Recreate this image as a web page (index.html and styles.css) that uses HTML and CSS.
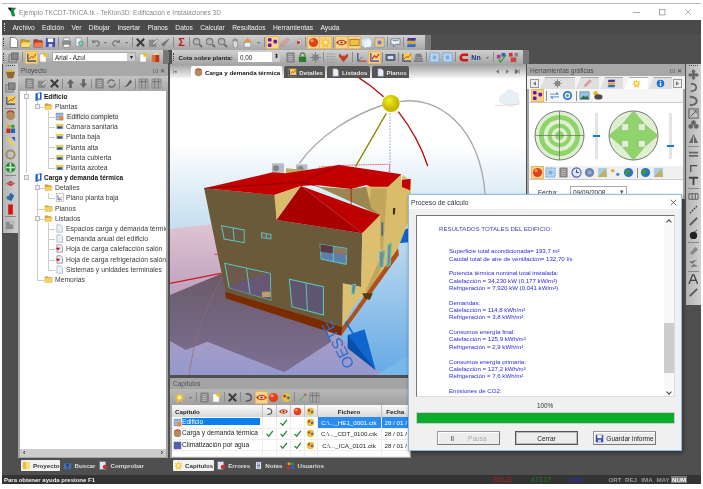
FILE: index.html
```html
<!DOCTYPE html>
<html lang="es">
<head>
<meta charset="utf-8">
<title>TeKton3D</title>
<link rel="stylesheet" href="styles.css">
</head>
<body>
<svg class="defs" xmlns="http://www.w3.org/2000/svg">
<symbol id="new" viewBox="0 0 12 12"><path d="M2.500 .5h5l3 3v8h-8z" fill="#fff" stroke="#777"/></symbol>
<symbol id="open" viewBox="0 0 12 12"><path d="M1 3h4l1 1h4v7H1z" fill="#d9a520" stroke="#8a6a10" stroke-width=".6"/><path d="M2 6h10l-2 5H1z" fill="#f8dc78"/></symbol>
<symbol id="openr" viewBox="0 0 12 12"><path d="M1 3h4l1 1h4v7H1z" fill="#c43a28" stroke="#7a2010" stroke-width=".6"/><path d="M2 6h10l-2 5H1z" fill="#ee7a50"/></symbol>
<symbol id="save" viewBox="0 0 12 12"><rect x="1" y="1" width="10" height="10" fill="#3b4fb0"/><rect x="3" y="1.500" width="6" height="4" fill="#fff"/><rect x="4" y="7.500" width="4" height="3.500" fill="#ccd"/></symbol>
<symbol id="print" viewBox="0 0 12 12"><rect x="3" y="1" width="6" height="3" fill="#eee" stroke="#777" stroke-width=".6"/><rect x="1" y="4" width="10" height="5" fill="#8a8f96"/><rect x="3" y="8" width="6" height="3" fill="#fff" stroke="#777" stroke-width=".6"/></symbol>
<symbol id="prev" viewBox="0 0 12 12"><path d="M2 1h6v9H2z" fill="#eef" stroke="#778" stroke-width=".6"/><circle cx="7.500" cy="7" r="2.500" fill="#7fd0a0" stroke="#387" stroke-width=".7"/></symbol>
<symbol id="undo" viewBox="0 0 12 12"><path d="M3 3v3h3M3 6c2-3 7-2 7 1 0 2-2 3-3 3" fill="none" stroke="#777" stroke-width="1.300"/></symbol>
<symbol id="redo" viewBox="0 0 12 12"><path d="M9 3v3H6M9 6c-2-3-7-2-7 1 0 2 2 3 3 3" fill="none" stroke="#777" stroke-width="1.300"/></symbol>
<symbol id="caret" viewBox="0 0 12 12"><path d="M3.500 5h5L6 8z" fill="#666"/></symbol>
<symbol id="x" viewBox="0 0 12 12"><path d="M2 2l8 8M10 2l-8 8" stroke="#3c3c3c" stroke-width="2.200"/></symbol>
<symbol id="edit" viewBox="0 0 12 12"><rect x="1" y="3" width="8" height="8" fill="#8a8a8a"/><path d="M5 7l5-5 1.500 1.500-5 5H5z" fill="#d8d8d8" stroke="#555" stroke-width=".5"/></symbol>
<symbol id="chk" viewBox="0 0 12 12"><path d="M1 8l3 3 7-10-5 3z" fill="#777"/></symbol>
<symbol id="zoom" viewBox="0 0 12 12"><circle cx="5" cy="5" r="3.500" fill="#b4b4b4" stroke="#777" stroke-width="1.200"/><path d="M8 8l3 3" stroke="#666" stroke-width="1.800"/></symbol>
<symbol id="hand" viewBox="0 0 12 12"><path d="M3 6V3h1v2-3h1.500v3-3H7v3-2h1.300v5l-1 4H4.500z" fill="#ddd" stroke="#777" stroke-width=".6"/></symbol>
<symbol id="home" viewBox="0 0 12 12"><path d="M1 6l5-5 5 5z" fill="#e8923a"/><rect x="2.500" y="6" width="7" height="5" fill="#e8eef6" stroke="#789" stroke-width=".5"/></symbol>
<symbol id="feet" viewBox="0 0 12 12"><rect x="1" y="1" width="4" height="4" rx="1.200" fill="#6a15b0"/><rect x="7" y="3" width="4" height="4" rx="1.200" fill="#6a15b0"/><rect x="1" y="7" width="4" height="4" rx="1.200" fill="#6a15b0"/></symbol>
<symbol id="pen" viewBox="0 0 12 12"><path d="M2 10l1-3 6-6 2 2-6 6z" fill="#e7a0a0" stroke="#a66" stroke-width=".5"/></symbol>
<symbol id="target" viewBox="0 0 12 12"><path d="M2 6l8-5v9z" fill="#ddd" stroke="#888" stroke-width=".6"/><circle cx="7" cy="6" r="2" fill="#d04030"/></symbol>
<symbol id="ball" viewBox="0 0 12 12"><circle cx="6" cy="6" r="5" fill="#e0401a"/><circle cx="4.500" cy="4" r="1.800" fill="#f59a60"/></symbol>
<symbol id="sun" viewBox="0 0 12 12"><path d="M6 0l1.300 3.500L11 2 9 5.500 12 7 8.500 8 9 12 6 9.500 3 12l.5-4L0 7l3-1.500L1 2l3.700 1.500z" fill="#f8c030"/><circle cx="6" cy="6" r="2.200" fill="#fff0a0"/></symbol>
<symbol id="eye" viewBox="0 0 12 12"><path d="M0 6c3-4 9-4 12 0-3 4-9 4-12 0z" fill="#c83a20"/><ellipse cx="6" cy="6" rx="3.500" ry="1.800" fill="#ffd9a0"/><circle cx="6" cy="6" r="1.200" fill="#433"/></symbol>
<symbol id="screen" viewBox="0 0 12 12"><rect x="1" y="2.500" width="10" height="7" fill="#f0c040" stroke="#806020" stroke-width=".7"/></symbol>
<symbol id="cube" viewBox="0 0 12 12"><path d="M1 3l7-2 3 2v7l-7 1.500L1 9z" fill="#d8e6f6"/><path d="M4 4l7-1v7l-7 1.500z" fill="#eef5fc"/></symbol>
<symbol id="box" viewBox="0 0 12 12"><rect x="1" y="1" width="10" height="10" fill="#f0c880" stroke="#88a" stroke-width=".7"/><rect x="4" y="4" width="4" height="4" fill="#5d7bc0"/></symbol>
<symbol id="bubble" viewBox="0 0 12 12"><path d="M1 2h10v6H6l-2 3V8H1z" fill="#eef2f8" stroke="#6a7a90"/><path d="M3 4h6" stroke="#48a" stroke-width="1"/></symbol>
<symbol id="layers" viewBox="0 0 12 12"><path d="M2 1h9l-1 3H1z" fill="#4a2fa8"/><path d="M2 4.500h9l-1 3H1z" fill="#e0a020"/><path d="M2 8h9l-1 3H1z" fill="#2a70c8"/></symbol>
<symbol id="rect" viewBox="0 0 12 12"><rect x="1" y="3" width="8" height="8" fill="#aaa" stroke="#666" stroke-width=".7"/><rect x="4" y="1" width="7" height="7" fill="#888" stroke="#555" stroke-width=".7"/></symbol>
<symbol id="chart" viewBox="0 0 12 12"><rect x="1" y="1" width="10" height="10" fill="#f2d050"/><path d="M2 2v8h9" fill="none" stroke="#1a3aa8" stroke-width="1.200"/><path d="M3 8l3-3 2 1 3-4" fill="none" stroke="#c03020" stroke-width="1"/></symbol>
<symbol id="star" viewBox="0 0 12 12"><path d="M2 2h7v9H2z" fill="#fff" stroke="#999" stroke-width=".6"/><path d="M8 0l1 2 2 .5-1.500 1.500.5 2-2-1-2 1 .5-2L5 2.500 7 2z" fill="#f2c020"/></symbol>
<symbol id="boxr" viewBox="0 0 12 12"><path d="M2 3h8v8H2z" fill="#e07030"/><path d="M6 3h4v8H6z" fill="#c03020"/><path d="M3 3l2-2h4l1 2z" fill="#f0d8a0"/></symbol>
<symbol id="calc" viewBox="0 0 12 12"><rect x="2" y="1" width="8" height="10" fill="#888" stroke="#666" stroke-width=".5"/><path d="M3.500 3h5M3.500 5h5M3.500 7h5M3.500 9h5" stroke="#ccc" stroke-width=".8"/></symbol>
<symbol id="lock" viewBox="0 0 12 12"><path d="M3.500 5V3.500a2.500 2.500 0 015 0V5" fill="none" stroke="#3a8a3a" stroke-width="1.200"/><rect x="2" y="5" width="8" height="6" fill="#2f7a2f"/></symbol>
<symbol id="gear" viewBox="0 0 12 12"><circle cx="6" cy="6" r="3" fill="#bbb" stroke="#666"/><path d="M6 0v12M0 6h12M2 2l8 8M10 2l-8 8" stroke="#777" stroke-width=".9"/></symbol>
<symbol id="grid" viewBox="0 0 12 12"><path d="M1 2h10M1 5h10M1 8h10M1 11h10" stroke="#8a8a9a" stroke-width="1" stroke-dasharray="1 1"/></symbol>
<symbol id="redbox" viewBox="0 0 12 12"><path d="M1 2l5 2 5-2v3l-5 6-5-6z" fill="#c23a20"/><path d="M3 4h6" stroke="#aaa"/></symbol>
<symbol id="axes" viewBox="0 0 12 12"><path d="M2 1v9" stroke="#2a3ab0" stroke-width="1.200"/><path d="M2 10h9" stroke="#c03030" stroke-width="1.200"/><path d="M2 10l5-5" stroke="#3a9a3a"/></symbol>
<symbol id="axes2" viewBox="0 0 12 12"><path d="M2 1v9h9" fill="none" stroke="#2a3ab0" stroke-width="1.200"/><path d="M3 8l3-4 2 2 3-4" fill="none" stroke="#d03020" stroke-width="1.300"/></symbol>
<symbol id="monitor" viewBox="0 0 12 12"><rect x="1" y="2.500" width="10" height="7" fill="#5a6e90" stroke="#333" stroke-width=".5"/><rect x="3" y="4.500" width="6" height="3" fill="#dfe6f2"/></symbol>
<symbol id="gray3d" viewBox="0 0 12 12"><path d="M3 2h6l2 9H1z" fill="#808080"/><path d="M2 6h8M1.500 8.500h9" stroke="#aaa" stroke-width=".7"/></symbol>
<symbol id="bluegrid" viewBox="0 0 12 12"><rect x="1" y="1" width="10" height="10" fill="#b8d4ee" stroke="#5a98d8" stroke-dasharray="1.500 1"/><rect x="4" y="4" width="4" height="4" fill="#7ab0e4"/></symbol>
<symbol id="magnet" viewBox="0 0 12 12"><path d="M11 3H6a3 3 0 000 6h5" fill="none" stroke="#d01818" stroke-width="2.800"/></symbol>
<symbol id="chk2" viewBox="0 0 12 12"><rect x="1" y="3" width="4" height="4" fill="#b03a8a"/><rect x="6" y="1" width="4" height="4" fill="#3a60c0"/><path d="M3 8l2 3 6-8" fill="none" stroke="#30a040" stroke-width="1.500"/></symbol>
<symbol id="red2" viewBox="0 0 12 12"><rect x="1" y="1" width="4" height="4" fill="#d03030"/><rect x="7" y="1" width="4" height="4" fill="#888"/><rect x="3" y="6" width="6" height="5" fill="#d04040"/></symbol>
<symbol id="up" viewBox="0 0 12 12"><path d="M6 1l4 5H7.500v5h-3V6H2z" fill="#666"/></symbol>
<symbol id="down" viewBox="0 0 12 12"><path d="M6 11l4-5H7.500V1h-3v5H2z" fill="#666"/></symbol>
<symbol id="refresh" viewBox="0 0 12 12"><path d="M2 6a4 4 0 017-2.500M10 6a4 4 0 01-7 2.500" fill="none" stroke="#666" stroke-width="1.500"/></symbol>
<symbol id="pin" viewBox="0 0 12 12"><path d="M2 10l3-2 4-6 2 2-5 5z" fill="#555"/></symbol>
<symbol id="table" viewBox="0 0 12 12"><rect x="1" y="1" width="10" height="10" fill="#aaa" stroke="#777" stroke-width=".6"/><path d="M4 1v10M8 1v10M1 4h10" stroke="#666" stroke-width=".8"/></symbol>
<symbol id="bld" viewBox="0 0 12 12"><path d="M2 2l8-2v10l-8 2z" fill="#1a5ad0"/><path d="M5 2v7l3-.700V1.500" fill="#fff"/><rect x="5" y="8" width="3" height="3" fill="#8ab"/></symbol>
<symbol id="foldero" viewBox="0 0 12 12"><path d="M1 2h4l1 1h4v7H1z" fill="#caa040"/><path d="M2.500 5H12l-2 5H1z" fill="#f6d060"/></symbol>
<symbol id="folder" viewBox="0 0 12 12"><path d="M1 2h4l1 1h5v7H1z" fill="#caa040"/><rect x="1" y="4" width="10" height="6" fill="#f6d060"/></symbol>
<symbol id="plan" viewBox="0 0 12 12"><rect x="2" y="3.500" width="9" height="6" fill="#8fa4ba"/><rect x="1" y="2.500" width="10" height="3" fill="#e8d050"/><rect x="3" y="6" width="6" height="2.500" fill="#314a78"/></symbol>
<symbol id="planact" viewBox="0 0 12 12"><rect x="1" y="1" width="10" height="10" fill="#7c9ac4"/><path d="M1 4.500h10M1 8h10M4 1v10M8 1v10" stroke="#dde" stroke-width=".7"/><rect x="6" y="6" width="5" height="5" fill="#e8882a"/></symbol>
<symbol id="planred" viewBox="0 0 12 12"><rect x="2" y="1" width="9" height="10" fill="#fff" stroke="#889" stroke-width=".6"/><path d="M4 3v6h5" fill="none" stroke="#2a3ab0"/><path d="M5 8l4-3" stroke="#d03020"/></symbol>
<symbol id="doc" viewBox="0 0 12 12"><path d="M2.500 1h5l2.500 2.500V11H2.500z" fill="#e8eef6" stroke="#7a8aa0" stroke-width=".6"/></symbol>
<symbol id="docr" viewBox="0 0 12 12"><path d="M2.500 1h5l2.500 2.500V11H2.500z" fill="#e8eef6" stroke="#444" stroke-width=".6"/><path d="M1 5h6L4 8.500z" fill="#c01010"/></symbol>
<symbol id="arrL" viewBox="0 0 12 12"><path d="M8 3v6L4 6z" fill="#777"/></symbol>
<symbol id="arrR" viewBox="0 0 12 12"><path d="M4 3v6l4-3z" fill="#777"/></symbol>
<symbol id="arrE" viewBox="0 0 12 12"><path d="M3 3v6l4-3zM8 3v6" fill="#666" stroke="#666"/></symbol>
<symbol id="info" viewBox="0 0 12 12"><circle cx="6" cy="6" r="5" fill="#1a70d8"/><rect x="5" y="5" width="2" height="4.500" fill="#fff"/><rect x="5" y="2.500" width="2" height="1.500" fill="#fff"/></symbol>
<symbol id="swap" viewBox="0 0 12 12"><path d="M1 4h7V2l3 3H1zM11 8H4v2L1 7h10z" fill="#2a7ad8"/></symbol>
<symbol id="rot" viewBox="0 0 12 12"><circle cx="6" cy="6" r="4" fill="none" stroke="#2a7ad8" stroke-width="2"/><circle cx="6" cy="6" r="1.500" fill="#4a9a3a"/></symbol>
<symbol id="land" viewBox="0 0 12 12"><rect x="1" y="2" width="10" height="8" fill="#8ec6e8" stroke="#456" stroke-width=".5"/><path d="M1 10l4-4 2 2 2-2 2 4z" fill="#3a6a50"/></symbol>
<symbol id="cloud" viewBox="0 0 12 12"><circle cx="4" cy="3.500" r="2.500" fill="#f0b020"/><ellipse cx="7" cy="7.500" rx="4.500" ry="2.800" fill="#4a4a4a"/></symbol>
<symbol id="globe" viewBox="0 0 12 12"><circle cx="6" cy="6" r="5" fill="#2a70c8"/><path d="M3 3l4 0 1 3-3 1-1 3-2-3z" fill="#3a9a3a"/></symbol>
<symbol id="clock" viewBox="0 0 12 12"><circle cx="6" cy="6" r="5" fill="#dfe6f6" stroke="#4a60b0" stroke-width="1.200"/><path d="M6 3v3h2.500" fill="none" stroke="#335"/></symbol>
<symbol id="orb" viewBox="0 0 12 12"><circle cx="6" cy="6" r="5" fill="#6a82b0"/><circle cx="6" cy="6" r="2.500" fill="#98a8c8"/></symbol>
<symbol id="dots" viewBox="0 0 12 12"><circle cx="3" cy="4" r="1.800" fill="#f2a020"/><circle cx="8.500" cy="8" r="1.800" fill="#3a8ad8"/></symbol>
<symbol id="win" viewBox="0 0 12 12"><rect x="1" y="1" width="10" height="10" fill="#a6d0e6"/><path d="M1 11L9 2l2 9z" fill="#c4b060"/></symbol>
<symbol id="gemb" viewBox="0 0 12 12"><path d="M1 3h10l-2 7H3z" fill="#8f6a30"/><path d="M3 1h6l2 2H1z" fill="#e8b040"/></symbol>
<symbol id="rgem" viewBox="0 0 12 12"><circle cx="6" cy="6" r="5" fill="#b08a60"/><path d="M2 3a5 5 0 018 0" fill="none" stroke="#c03020" stroke-width="1.500"/></symbol>
<symbol id="people" viewBox="0 0 12 12"><circle cx="4" cy="3.500" r="2" fill="#e8a020"/><circle cx="8.500" cy="3.500" r="2" fill="#3a9a3a"/><rect x="1.500" y="6" width="4.500" height="5" fill="#c03020"/><rect x="6.500" y="6" width="4.500" height="5" fill="#2a60c0"/></symbol>
<symbol id="ypen" viewBox="0 0 12 12"><path d="M1 2l4 1 6 7-2 1-6-6z" fill="#f0d040"/><path d="M7 1h4v5z" fill="#2a60c0"/></symbol>
<symbol id="coil" viewBox="0 0 12 12"><circle cx="6" cy="6" r="4.500" fill="none" stroke="#a08a50" stroke-width="2"/></symbol>
<symbol id="fan" viewBox="0 0 12 12"><circle cx="6" cy="6" r="5.500" fill="#2a8a3a"/><path d="M6 1v10M1 6h10" stroke="#c4eac4" stroke-width="1.800"/></symbol>
<symbol id="redf" viewBox="0 0 12 12"><path d="M1 6l5-3 5 3-5 3z" fill="#d03a4a"/><path d="M1 6h10" stroke="#886" stroke-width="1"/></symbol>
<symbol id="blue2" viewBox="0 0 12 12"><path d="M2 9l4-7 4 3-3 6z" fill="#2a6aa8"/><circle cx="3.500" cy="7" r="1.800" fill="#5a6a7a"/></symbol>
<symbol id="redr" viewBox="0 0 12 12"><rect x="3.500" y=".5" width="5" height="11" fill="#d80f0f"/></symbol>
<symbol id="grayt" viewBox="0 0 12 12"><rect x="1" y="3" width="8" height="8" fill="#8a8a8a"/><path d="M5 1h6v5H5z" fill="#bbb"/></symbol>
<symbol id="cross4" viewBox="0 0 12 12"><path d="M6 0l2.500 3h-1v2h2V4L12 6.500 9.500 9V8h-2v1.500h1L6 12 3.500 9.500h1V8h-2v1L0 6.500 2.500 4v1h2V3h-1z" fill="#666"/></symbol>
<symbol id="curve" viewBox="0 0 12 12"><path d="M3 2c8 0 8 8 0 8" fill="none" stroke="#555" stroke-width="1.600"/></symbol>
<symbol id="curve2" viewBox="0 0 12 12"><path d="M2 2c10 0 10 9 0 9" fill="none" stroke="#666" stroke-width="2.300"/></symbol>
<symbol id="scale" viewBox="0 0 12 12"><rect x="1" y="1" width="10" height="10" fill="none" stroke="#555"/><path d="M3 9l6-6M6 3h3v3" fill="none" stroke="#555"/></symbol>
<symbol id="clover" viewBox="0 0 12 12"><circle cx="6" cy="3" r="2.600" fill="#666"/><circle cx="3" cy="7" r="2.600" fill="#666"/><circle cx="9" cy="7" r="2.600" fill="#666"/></symbol>
<symbol id="tri" viewBox="0 0 12 12"><path d="M6 1l5 10H1z" fill="#666"/><path d="M6 4v7" stroke="#ccc"/></symbol>
<symbol id="bars" viewBox="0 0 12 12"><path d="M1 4h10M1 7.500h10" stroke="#666" stroke-width="2"/></symbol>
<symbol id="hook" viewBox="0 0 12 12"><path d="M3 11V4h7" fill="none" stroke="#444" stroke-width="1.300"/></symbol>
<symbol id="tee" viewBox="0 0 12 12"><path d="M1 2h10v2H7v7H5V4H1z" fill="#444"/></symbol>
<symbol id="gridr" viewBox="0 0 12 12"><path d="M1 3h10v6H1zM4.500 3v6M8 3v6" fill="none" stroke="#555"/></symbol>
<symbol id="line" viewBox="0 0 12 12"><path d="M2 10l8-8" stroke="#444" stroke-width="1.400" stroke-dasharray="2 1"/></symbol>
<symbol id="slash" viewBox="0 0 12 12"><path d="M2 10L10 2" stroke="#555" stroke-width="2"/></symbol>
<symbol id="blob" viewBox="0 0 12 12"><circle cx="6" cy="7" r="4" fill="#222"/><path d="M6 4l4-3" stroke="#444"/></symbol>
<symbol id="can" viewBox="0 0 12 12"><path d="M2 9l6-7 3 3-6 6z" fill="#888"/></symbol>
<symbol id="wave" viewBox="0 0 12 12"><path d="M1 4l9-2-5 4 6 3-9 1 4-3z" fill="#777"/></symbol>
<symbol id="atext" viewBox="0 0 12 12"><path d="M1 11L5 1h1.500l4 10M3 7h6" fill="none" stroke="#444" stroke-width="1.400"/></symbol>
<symbol id="binoc" viewBox="0 0 12 12"><rect x="1" y="3" width="4" height="8" rx="1" fill="#3a70c0"/><rect x="7" y="3" width="4" height="8" rx="1" fill="#3a70c0"/><rect x="4" y="4" width="4" height="3" fill="#2a4a80"/></symbol>
<symbol id="book" viewBox="0 0 12 12"><path d="M1 1h5v10H1z" fill="#e8c040"/><path d="M6 1h5v10H6z" fill="#f4e080"/></symbol>
<symbol id="wand" viewBox="0 0 12 12"><path d="M2 10l7-7" stroke="#7a7" stroke-width="1.500"/><path d="M9 1l.5 1.500L11 3 9.500 3.500 9 5l-.5-1.500L7 3l1.500-.5z" fill="#d04030"/></symbol>
<symbol id="note" viewBox="0 0 12 12"><rect x="2" y="1" width="8" height="10" fill="#dfe6f2" stroke="#445"/><path d="M4 4h4M4 6h4M4 8h4" stroke="#557"/></symbol>
<symbol id="err" viewBox="0 0 12 12"><rect x="1" y="1" width="8" height="10" fill="#dfe6f2" stroke="#789" stroke-width=".6"/><circle cx="8" cy="8" r="3" fill="#d03030"/></symbol>
<symbol id="smile" viewBox="0 0 12 12"><circle cx="6" cy="6" r="5" fill="#e8c040"/><circle cx="4" cy="4.500" r="1.500" fill="#c03020"/><circle cx="8" cy="6.500" r="1.500" fill="#3060c0"/></symbol>
<symbol id="tick" viewBox="0 0 12 12"><path d="M2 6.500L5 9.500 10.500 2.500" fill="none" stroke="#2a8a3a" stroke-width="1.800"/></symbol>
<symbol id="hdd" viewBox="0 0 12 12"><rect x="1" y="1" width="10" height="10" fill="#5560a8"/></symbol>
</svg>

<div class="window">
  <header class="titlebar">
    <svg class="applogo" viewBox="0 0 12 12"><path d="M1 1h10L9 4H8l2 7H6L4 5 3 4z" fill="#1f8a3a"/><path d="M1 1h5L4 5z" fill="#123"/></svg>
    <span class="apptitle">Ejemplo TKCDT-TKICA.tk - TeKton3D: Edificación e Instalaciones 3D</span>
    <span class="winctrls">
      <svg class="wc" viewBox="0 0 10 10"><path d="M0 5h10" stroke="#888"/></svg>
      <svg class="wc" viewBox="0 0 10 10"><rect x=".5" y=".5" width="8" height="8" fill="none" stroke="#888"/></svg>
      <svg class="wc" viewBox="0 0 10 10"><path d="M.5 .5l8 8M8.500 .5l-8 8" stroke="#888"/></svg>
    </span>
  </header>

  <nav class="menubar">
    <span class="grip"></span>
    <span>Archivo</span><span>Edición</span><span>Ver</span><span>Dibujar</span><span>Insertar</span><span>Planos</span><span>Datos</span><span>Calcular</span><span>Resultados</span><span>Herramientas</span><span>Ayuda</span>
  </nav>

  <div class="tbrow1">
    <div class="tb tb1">
      <span class="grip dk"></span>
      <svg class="i"><use href="#new"/></svg><svg class="i"><use href="#open"/></svg><svg class="i"><use href="#openr"/></svg><svg class="i"><use href="#save"/></svg><b class="sep"></b>
      <svg class="i"><use href="#print"/></svg><svg class="i"><use href="#prev"/></svg><b class="sep"></b>
      <svg class="i"><use href="#undo"/></svg><svg class="c"><use href="#caret"/></svg><svg class="i"><use href="#redo"/></svg><svg class="c"><use href="#caret"/></svg><b class="sep"></b>
      <svg class="i"><use href="#x"/></svg><svg class="i"><use href="#edit"/></svg><svg class="i"><use href="#chk"/></svg><b class="sep"></b>
      <span class="sigma">Σ</span><b class="sep"></b>
      <svg class="i"><use href="#zoom"/></svg><svg class="i"><use href="#zoom"/></svg><svg class="i"><use href="#zoom"/></svg><svg class="i"><use href="#hand"/></svg><svg class="i"><use href="#home"/></svg><svg class="c"><use href="#caret"/></svg><b class="sep"></b>
      <svg class="i on"><use href="#feet"/></svg><svg class="i"><use href="#pen"/></svg><svg class="i"><use href="#target"/></svg><b class="sep"></b>
      <svg class="i on"><use href="#ball"/></svg><svg class="i on"><use href="#sun"/></svg><b class="sep"></b>
      <svg class="i on"><use href="#eye"/></svg><svg class="i on"><use href="#screen"/></svg><svg class="i"><use href="#cube"/></svg><svg class="i"><use href="#box"/></svg><b class="sep"></b>
      <svg class="i"><use href="#bubble"/></svg><b class="sep"></b><svg class="i"><use href="#layers"/></svg>
      <span class="tbend"></span>
    </div>
  </div>

  <div class="tbrow2">
    <div class="tb tb2l">
      <span class="grip dk"></span>
      <svg class="i"><use href="#rect"/></svg><b class="sep wide"></b>
      <svg class="i on"><use href="#chart"/></svg><svg class="i"><use href="#star"/></svg>
      <span class="select"><span class="selval">Arial - Azul</span><span class="selbtn">▾</span></span>
      <svg class="i"><use href="#star"/></svg><svg class="i"><use href="#boxr"/></svg>
      <span class="tbend"></span>
    </div>
    <div class="tb tb2r">
      <span class="grip dk"></span>
      <label class="cota">Cota sobre planta:</label>
      <span class="numinput"><span>0,00</span><span class="spin">⬍</span></span>
      <svg class="i"><use href="#calc"/></svg><svg class="i"><use href="#lock"/></svg><svg class="i"><use href="#gear"/></svg><b class="sep"></b>
      <svg class="i"><use href="#grid"/></svg><svg class="i"><use href="#redbox"/></svg><b class="sep wide"></b>
      <svg class="i"><use href="#axes"/></svg><svg class="i on"><use href="#axes2"/></svg><b class="sep"></b>
      <svg class="i"><use href="#monitor"/></svg><b class="sep"></b>
      <svg class="i"><use href="#chart"/></svg><svg class="i"><use href="#gray3d"/></svg><b class="sep"></b>
      <svg class="i"><use href="#bluegrid"/></svg><svg class="i"><use href="#bluegrid"/></svg><b class="sep"></b>
      <svg class="i"><use href="#magnet"/></svg>
      <span class="nn">Nn</span><svg class="c"><use href="#caret"/></svg><b class="sep"></b>
      <svg class="i"><use href="#chk2"/></svg><svg class="i"><use href="#red2"/></svg>
      <span class="tbend"></span>
    </div>
  </div>

  <main class="workspace">
    <aside class="rail railL">
      <span class="railgrip"></span>
      <svg class="r"><use href="#gemb"/></svg><svg class="r"><use href="#rect"/></svg><svg class="r"><use href="#chart"/></svg><b class="hs"></b>
      <svg class="r"><use href="#rgem"/></svg><svg class="r"><use href="#people"/></svg><svg class="r"><use href="#ypen"/></svg><svg class="r"><use href="#coil"/></svg><svg class="r"><use href="#fan"/></svg><b class="hs"></b>
      <svg class="r"><use href="#redf"/></svg><svg class="r"><use href="#blue2"/></svg><svg class="r"><use href="#redr"/></svg><b class="hs"></b>
      <svg class="r"><use href="#grayt"/></svg>
    </aside>

    <section class="project">
      <div class="paneltitle"><span>Proyecto</span><span class="pnctl">⊡ ✕</span></div>
      <div class="tb ptb">
        <svg class="i"><use href="#calc"/></svg><svg class="i"><use href="#edit"/></svg><svg class="i"><use href="#x"/></svg><b class="sep"></b>
        <svg class="i"><use href="#up"/></svg><svg class="i"><use href="#down"/></svg><b class="sep"></b>
        <svg class="i"><use href="#calc"/></svg><svg class="i"><use href="#refresh"/></svg><b class="sep"></b>
        <svg class="i"><use href="#pin"/></svg><b class="sep"></b>
        <svg class="i"><use href="#table"/></svg><svg class="i"><use href="#table"/></svg>
      </div>
      <div class="treebox">
        <ul class="tree">
          <li class="n0 v0"><i class="pm"></i><svg class="t"><use href="#bld"/></svg><strong>Edificio</strong></li>
          <li class="n1 v0"><i class="pm"></i><svg class="t"><use href="#foldero"/></svg>Plantas</li>
          <li class="n2 v0 more sel"><svg class="t"><use href="#planact"/></svg><span class="seltx">Edificio completo</span></li>
          <li class="n2 v0 more"><svg class="t"><use href="#plan"/></svg>Cámara sanitaria</li>
          <li class="n2 v0 more"><svg class="t"><use href="#plan"/></svg>Planta baja</li>
          <li class="n2 v0 more"><svg class="t"><use href="#plan"/></svg>Planta alta</li>
          <li class="n2 v0 more"><svg class="t"><use href="#plan"/></svg>Planta cubierta</li>
          <li class="n2 v0"><svg class="t"><use href="#plan"/></svg>Planta azotea</li>
          <li class="n0"><i class="pm"></i><svg class="t"><use href="#bld"/></svg><strong>Carga y demanda térmica</strong></li>
          <li class="n1 v1"><i class="pm"></i><svg class="t"><use href="#foldero"/></svg>Detalles</li>
          <li class="n2 v1"><svg class="t"><use href="#planred"/></svg>Plano planta baja</li>
          <li class="n1 v1"><svg class="t"><use href="#folder"/></svg>Planos</li>
          <li class="n1 v1"><i class="pm"></i><svg class="t"><use href="#foldero"/></svg>Listados</li>
          <li class="n2 v1 more"><svg class="t"><use href="#doc"/></svg>Espacios carga y demanda térmica</li>
          <li class="n2 v1 more"><svg class="t"><use href="#doc"/></svg>Demanda anual del edificio</li>
          <li class="n2 v1 more"><svg class="t"><use href="#docr"/></svg>Hoja de carga calefacción salón</li>
          <li class="n2 v1 more"><svg class="t"><use href="#docr"/></svg>Hoja de carga refrigeración salón</li>
          <li class="n2 v1"><svg class="t"><use href="#doc"/></svg>Sistemas y unidades terminales</li>
          <li class="n1"><svg class="t"><use href="#folder"/></svg>Memorias</li>
        </ul>
      </div>
      <div class="hscroll"><span>‹</span><span>›</span></div>
      <div class="btabs ptabs">
        <span class="btab act"><svg class="t"><use href="#book"/></svg>Proyecto</span>
        <span class="btab"><svg class="t"><use href="#binoc"/></svg>Buscar</span>
        <span class="btab"><svg class="t"><use href="#err"/></svg>Comprobar</span>
      </div>
    </section>

    <section class="center">
      <div class="viewtabs">
        <span class="navfirst">|◂</span>
        <span class="vtab act"><svg class="t"><use href="#rgem"/></svg>Carga y demanda térmica</span>
        <span class="vtab"><svg class="t"><use href="#chart"/></svg>Detalles</span>
        <span class="vtab"><svg class="t"><use href="#doc"/></svg>Listados</span>
        <span class="vtab"><svg class="t"><use href="#doc"/></svg>Planos</span>
        <span class="vnav"><svg class="t"><use href="#arrL"/></svg><svg class="t"><use href="#arrR"/></svg><svg class="t"><use href="#arrE"/></svg></span>
      </div>
      <div class="viewport">
        <svg class="scene" viewBox="3 -21 1065 891" preserveAspectRatio="none">
          <defs>
            <linearGradient id="sky" x1="0" y1="0" x2="0" y2="1"><stop offset="0" stop-color="#fff"/><stop offset=".22" stop-color="#fff"/><stop offset=".5" stop-color="#c6dff0"/><stop offset="1" stop-color="#66aae6"/></linearGradient>
            <linearGradient id="pink" x1="0" y1="0" x2="0" y2="1"><stop offset="0" stop-color="#e0c3d2"/><stop offset=".5" stop-color="#bb9fbd"/><stop offset="1" stop-color="#9499cd"/></linearGradient>
            <linearGradient id="shad" x1="0" y1="0" x2="0" y2="1"><stop offset="0" stop-color="#6b5a68"/><stop offset="1" stop-color="#7b7096"/></linearGradient>
            <radialGradient id="sunb" cx=".4" cy=".35"><stop offset="0" stop-color="#f4ee20"/><stop offset="1" stop-color="#c4b800"/></radialGradient>
          </defs>
          <rect x="3" y="-21" width="1065" height="891" fill="url(#sky)"/>
          <path d="M3 432L130 418 640 870H3z" fill="url(#pink)"/>
          <path d="M620 870l420-260v260z" fill="#7ab8ec"/>
          <path d="M3 630L160 565 440 640 485 770 345 862 115 770 50 795 3 768z" fill="url(#shad)"/>
          <path d="M60 870C75 760 110 660 165 570" fill="none" stroke="#9a6a70" stroke-width="2"/>
          <path d="M3 595L155 565" stroke="#d01818" stroke-width="4"/>
          <path d="M136 508h14" stroke="#d01818" stroke-width="2"/>
          <path d="M390 235C450 150 550 90 640 60M690 50C800 30 930 120 946 330" fill="none" stroke="#a8a8a8" stroke-width="4"/>
          <path d="M566 -23C595 -5 620 15 642 35M686 80C725 130 755 185 774 243" fill="none" stroke="#b50d0d" stroke-width="4"/>
          <path d="M661 85V262" stroke="#6a6ac0" stroke-width="2" stroke-dasharray="5 4"/>
          <path d="M650 85L558 245" stroke="#8a8a00" stroke-width="4"/>
          <circle cx="664" cy="55" r="26" fill="url(#sunb)"/>
          <path d="M448 246L545 240 660 238 658 266" fill="none" stroke="#d03030" stroke-width="2" stroke-dasharray="5 2"/>
          <path d="M990 35l28-22 26 14 4 28-26 10-32-14z" fill="#e8eef6" stroke="#c4ccd8"/>
          <path d="M975 62l72-4" stroke="#f0c4c4" stroke-width="2"/>
          <rect x="308" y="235" width="36" height="28" fill="#b8bcc0"/><circle cx="320" cy="250" r="9" fill="#808488"/>
          <rect x="380" y="238" width="34" height="28" fill="#b8bcc0"/><circle cx="393" cy="252" r="9" fill="#808488"/>
          <path d="M350 250L420 256V265L350 265z" fill="#c4a860"/>
          <path d="M690 440l26-10v42l-26 3z" fill="#0f66cc"/>
          <path d="M590 640L700 270 725 290 720 400 685 490z" fill="#d9bd6b"/>
          <path d="M697 285l26-4-2 35-24-10z" fill="#c40000"/>
          <path d="M590 305L695 268 685 490 585 640z" fill="#d9bd6b"/>
          <path d="M605 310H652L640 500 632 560 600 620H575L590 420z" fill="#c2a65e"/>
          <path d="M520 595L575 605 590 420 640 500 585 625 555 660 518 725z" fill="#dcc06f"/>
          <path d="M105 310L320 330 322 405 578 445 575 605 520 595 518 725 170 620 150 530z" fill="#6b5a3a"/>
          <path d="M105 310L310 262 350 265 510 240 695 268 655 305 605 305 590 300 545 312 440 300 395 303 315 330z" fill="#c20000"/>
          <path d="M105 310L395 292M510 240L395 292 450 305" fill="none" stroke="#7a0000" stroke-width="2"/>
          <path d="M315 330L395 303 322 405z" fill="#d9bc6e"/>
          <path d="M445 305L632 390 605 370 590 305 545 312z" fill="#9a8650"/>
          <path d="M395 303L322 405 578 445z" fill="#a80000"/>
          <path d="M395 303L632 390 578 445z" fill="#bd0000"/>
          <path d="M632 390L578 445 575 605 612 560 632 520z" fill="#dcc06f"/>
          <path d="M545 305V370" stroke="#a80000" stroke-width="2"/>
          <path d="M635 412l6 0v40l-6 0z" fill="#4a6a90"/>
          <path d="M670 370l7-2-1 20-6 1z" fill="#3a3020"/>
          <path d="M168 620L518 725 530 725 515 752 170 640z" fill="#7a2b00"/>
          <path d="M518 725L545 690 685 490 688 510 515 752z" fill="#b0501a"/>
          <path d="M578 625L610 625 600 645 585 640z" fill="#5a3a10"/>
          <g class="winstroke">
            <path d="M157 422L225 435 225 473 165 462z" fill="#6a5844"/><path d="M192 428L195 468"/>
            <path d="M277 443L305 448V462L277 458z" fill="#7a6050"/><path d="M291 446V460"/>
            <path d="M452 478L532 490 530 538 455 522z" fill="#5d7ea8"/><path d="M490 484L492 530"/>
            <path d="M453 478L490 484V505L453 500z" fill="#5a3a40" stroke="none"/>
            <path d="M495 487L532 492V510L495 505z" fill="#8a7a60" stroke="none"/>
            <path d="M167 535L303 565 305 645 180 608z" fill="#6c5a4c"/>
            <path d="M185 600L300 565 305 645 180 608z" fill="#675676" stroke="none"/><path d="M232 550L242 625"/>
            <path d="M360 583L462 605V690L368 665z" fill="#5f5570"/><path d="M410 594L414 678"/>
            <path d="M630 500L645 497 640 545 630 548z" fill="#7a8a90"/>
            <path d="M655 480L665 475 662 540 652 545z" fill="#7a8a90"/>
            <path d="M548 600L558 598 555 625 547 628z" fill="#607890"/>
          </g>
          <rect x="278" y="620" width="26" height="16" fill="#b8a06a"/>
          <path d="M528 710L550 745" stroke="#0f66cc" stroke-width="5"/>
          <path d="M535 750L585 733 618 855 535 790z" fill="#0f66cc"/><path d="M535 750L618 855 535 790z" fill="#084fa8"/>
          <text class="oeste" transform="translate(556 840) rotate(-118)">OESTE</text>
        </svg>
      </div>
      <div class="capitulos">
        <div class="captitle">Capítulos</div>
        <div class="tb ctb">
          <svg class="i"><use href="#sun"/></svg><svg class="c"><use href="#caret"/></svg><b class="sep"></b>
          <svg class="i"><use href="#calc"/></svg><svg class="i"><use href="#star"/></svg><b class="sep"></b>
          <svg class="i"><use href="#x"/></svg><b class="sep"></b>
          <svg class="i"><use href="#curve"/></svg><svg class="i on"><use href="#eye"/></svg><svg class="i"><use href="#ball"/></svg><svg class="i"><use href="#smile"/></svg><b class="sep"></b>
          <svg class="i"><use href="#wand"/></svg><svg class="i"><use href="#table"/></svg>
        </div>
        <table class="captable">
          <colgroup><col class="c1"><col class="c2"><col class="c2"><col class="c2"><col class="c3"><col class="c4"><col></colgroup>
          <thead><tr><th class="left">Capítulo</th><th><svg class="t"><use href="#curve"/></svg></th><th><svg class="t"><use href="#eye"/></svg></th><th><svg class="t"><use href="#ball"/></svg></th><th><svg class="t"><use href="#smile"/></svg></th><th>Fichero</th><th>Fecha</th></tr></thead>
          <tbody>
            <tr class="cur"><td class="name"><svg class="t"><use href="#planact"/></svg><span class="hl">Edificio</span></td><td></td><td><svg class="t"><use href="#tick"/></svg></td><td></td><td><svg class="t"><use href="#smile"/></svg></td><td class="hl2">C:\..._HE1_0001.ctk</td><td class="hl2 fl">28 / 01 / 2008</td></tr>
            <tr><td class="name"><svg class="t"><use href="#rgem"/></svg>Carga y demanda térmica</td><td><svg class="t"><use href="#tick"/></svg></td><td><svg class="t"><use href="#tick"/></svg></td><td><svg class="t"><use href="#tick"/></svg></td><td><svg class="t"><use href="#smile"/></svg></td><td>C:\..._CDT_0100.ctk</td><td class="fl">28 / 01 / 2008</td></tr>
            <tr><td class="name"><svg class="t"><use href="#hdd"/></svg>Climatización por agua</td><td></td><td><svg class="t"><use href="#tick"/></svg></td><td><svg class="t"><use href="#tick"/></svg></td><td><svg class="t"><use href="#smile"/></svg></td><td>C:\..._ICA_0101.ctk</td><td class="fl">28 / 01 / 2008</td></tr>
            <tr class="blank"><td></td><td></td><td></td><td></td><td></td><td></td><td></td></tr>
          </tbody>
        </table>
        <div class="btabs ctabs">
          <span class="btab act"><svg class="t"><use href="#sun"/></svg>Capítulos</span>
          <span class="btab"><svg class="t"><use href="#err"/></svg>Errores</span>
          <span class="btab"><svg class="t"><use href="#note"/></svg>Notas</span>
          <span class="btab"><svg class="t"><use href="#people"/></svg>Usuarios</span>
        </div>
      </div>
    </section>

    <section class="tools">
      <div class="paneltitle"><span>Herramientas gráficas</span><span class="pnctl">⊡ ✕</span></div>
      <div class="gtabs">
        <span class="gnav"><svg class="t"><use href="#arrL"/></svg></span>
        <span class="gtab wide"><svg class="t"><use href="#gear"/></svg></span>
        <span class="gtab"><svg class="t"><use href="#pen"/></svg></span>
        <span class="gtab"><svg class="t"><use href="#layers"/></svg></span>
        <span class="gtab act"><svg class="t"><use href="#sun"/></svg></span>
        <span class="gtab"><svg class="t"><use href="#info"/></svg></span>
        <span class="gnav"><svg class="t"><use href="#arrR"/></svg></span>
      </div>
      <div class="toolbody">
        <div class="gtb">
          <svg class="i on"><use href="#feet"/></svg><b class="sep"></b><svg class="i"><use href="#swap"/></svg><svg class="i"><use href="#rot"/></svg><b class="sep"></b><svg class="i"><use href="#land"/></svg><svg class="i"><use href="#cloud"/></svg>
        </div>
        <div class="dials">
          <svg class="dial" viewBox="0 0 52 52">
            <circle cx="26" cy="26" r="25" fill="#dff0d0" stroke="#555" stroke-width=".8"/>
            <circle cx="26" cy="26" r="21" fill="#8fd46a"/><circle cx="26" cy="26" r="16" fill="#dff0d0"/><circle cx="26" cy="26" r="12" fill="#8fd46a"/><circle cx="26" cy="26" r="8" fill="#dff0d0"/><circle cx="26" cy="26" r="4.500" fill="#8fd46a"/>
            <path d="M26 1v50M1 26h50" stroke="#666" stroke-width=".7"/>
          </svg>
          <span class="slider"><i class="thumb mid"></i></span>
          <svg class="dial" viewBox="0 0 52 52">
            <circle cx="26" cy="26" r="25" fill="#dff0d0" stroke="#555" stroke-width=".8"/>
            <path d="M26 1l11 13h-6v7h7v-6l13 11-13 11v-6h-7v7h6L26 51 15 38h6v-7h-7v6L1 26l13-11v6h7v-7h-6z" fill="#8fd46a" stroke="#8a9a80" stroke-width=".4"/>
          </svg>
          <span class="slider"><i class="thumb low"></i></span>
        </div>
        <div class="gtb2">
          <svg class="i on"><use href="#ball"/></svg><svg class="i"><use href="#bluegrid"/></svg><svg class="i"><use href="#calc"/></svg><svg class="i"><use href="#clock"/></svg><svg class="i"><use href="#orb"/></svg><svg class="i"><use href="#win"/></svg><svg class="i"><use href="#dots"/></svg><svg class="i"><use href="#globe"/></svg><b class="sep"></b><svg class="i"><use href="#globe"/></svg><svg class="i"><use href="#win"/></svg>
        </div>
        <div class="fecha"><label>Fecha:</label><span class="dateinput">09/09/2008 <span class="calbtn">▾</span></span></div>
      </div>
    </section>

    <aside class="rail railR">
      <span class="railgrip"></span>
      <svg class="r"><use href="#cross4"/></svg><svg class="r"><use href="#curve"/></svg><svg class="r"><use href="#curve2"/></svg><svg class="r"><use href="#scale"/></svg><svg class="r"><use href="#clover"/></svg><svg class="r"><use href="#tri"/></svg><b class="hs"></b>
      <svg class="r"><use href="#bars"/></svg><svg class="r"><use href="#hook"/></svg><svg class="r"><use href="#tee"/></svg><b class="hs"></b>
      <svg class="r"><use href="#gridr"/></svg><svg class="r"><use href="#line"/></svg><svg class="r"><use href="#slash"/></svg><svg class="r"><use href="#blob"/></svg><b class="hs"></b>
      <svg class="r"><use href="#can"/></svg><svg class="r"><use href="#wave"/></svg><b class="hs"></b>
      <svg class="r"><use href="#atext"/></svg><svg class="r"><use href="#slash"/></svg>
    </aside>
  </main>

  <footer class="statusbar">
    <span class="sthelp">Para obtener ayuda presione F1</span>
    <span class="stv red">305,31</span><span class="stv green">473,17</span><span class="stv blue">0,00</span>
    <span class="stk">ORT</span><span class="stk">REJ</span><span class="stk">IMA</span><span class="stk">MAY</span><span class="stk on">NUM</span>
  </footer>

  <section class="dialog">
    <div class="dlgtitle"><span>Proceso de cálculo</span><svg class="dlgx" viewBox="0 0 10 10"><path d="M1 1l8 8M9 1L1 9" stroke="#333" stroke-width="1"/></svg></div>
    <div class="report">
      <div class="reptext">
        <h2>RESULTADOS TOTALES DEL EDIFICIO:</h2>
        <p>Superficie total acondicionada= 193,7 m²<br>Caudal total de aire de ventilación= 132,70 l/s</p>
        <p>Potencia térmica nominal total instalada:<br>Calefacción = 34,230 kW (0,177 kW/m²)<br>Refrigeración = 7,920 kW (0,041 kW/m²)</p>
        <p>Demandas:<br>Calefacción = 114,8 kWh/m²<br>Refrigeración = 3,8 kWh/m²</p>
        <p>Consumos energía final:<br>Calefacción = 125,9 kWh/m²<br>Refrigeración = 2,9 kWh/m²</p>
        <p>Consumos energía primaria:<br>Calefacción = 127,2 kWh/m²<br>Refrigeración = 7,6 kWh/m²</p>
        <p>Emisiones de CO2:<br>Calefacción = 25,99 kg/m²</p>
      </div>
      <div class="vscroll"><span class="sup"></span><span class="sthumb"></span><span class="sdn"></span></div>
    </div>
    <div class="pct">100%</div>
    <div class="bar"></div>
    <div class="dlgbtns">
      <button class="btn dis"><span class="pause">II</span>Pausa</button>
      <button class="btn def">Cerrar</button>
      <button class="btn"><svg class="t"><use href="#save"/></svg>Guardar informe</button>
    </div>
  </section>
</div>
</body>
</html>
```

FILE: styles.css
```css
* { box-sizing: border-box; }
html, body { margin: 0; padding: 0; background: #fff; }
body { width: 703px; height: 489px; overflow: hidden; font-family: "Liberation Sans", Arial, sans-serif; font-size: 7px; color: #222; }
.defs { position: absolute; width: 0; height: 0; }
.window { position: relative; width: 699px; height: 481px; margin: 3px 0 0 2px; background: #4f4f4f; display: flex; flex-direction: column; filter: blur(.3px); }

.titlebar { height: 17px; background: #fff; border-top: 1px solid #b8b8b8; display: flex; align-items: center; padding-left: 5px; flex: none; }
.applogo { width: 10px; height: 10px; margin-right: 2px; }
.apptitle { font-size: 6.600px; color: #8a8a8a; }
.winctrls { margin-left: auto; display: flex; gap: 19px; margin-right: 9px; align-items: center; }
.wc { width: 7px; height: 7px; }

.menubar { height: 14px; flex: none; display: flex; align-items: center; color: #f2f2f2; font-size: 6.700px; padding-left: 2px; gap: 7.400px; background: #4a4a4a; white-space: nowrap; }
.grip { width: 2px; height: 8px; border-left: 1px dotted #ddd; margin-right: -1px; flex: none; }
.grip.dk { border-left-color: #444; margin: 0 1px; }

.tbrow1 { height: 16px; flex: none; display: flex; align-items: center; }
.tbrow2 { height: 14px; flex: none; display: flex; gap: 4px; }
.tb { display: flex; align-items: center; gap: 1.500px; background: linear-gradient(#d0d0d0, #a6a6a6); }
.tb1 { width: 429px; height: 15px; border-radius: 0 3px 3px 0; }
.tb2l { width: 166px; height: 14px; }
.tb2r { width: 357px; height: 14px; border-radius: 0 3px 3px 0; }
.i { width: 11px; height: 11px; flex: none; }
.i.on { background: #f8d488; outline: 1px solid #e8b860; }
.c { width: 7px; height: 11px; flex: none; }
.t { width: 9px; height: 9px; flex: none; }
.sep { width: 1px; height: 10px; background: #8a8a8a; margin: 0 .5px; flex: none; }
.sep.wide { margin: 0 1.500px; }
.sigma { width: 11px; text-align: center; color: #c01818; font-weight: bold; font-size: 11px; line-height: 11px; flex: none; }
.tbend { margin-left: auto; width: 6px; height: 100%; background: #777; border-radius: 0 3px 3px 0; flex: none; }

.select { width: 84px; height: 10px; background: #fff; border: 1px solid #aaa; display: flex; align-items: center; justify-content: space-between; margin-left: 1.500px; font-size: 6.300px; flex: none; padding-left: 2px; }
.selbtn { width: 8px; height: 100%; background: #ccc; text-align: center; line-height: 8px; }
.cota { font-weight: bold; font-size: 6.200px; color: #222; width: 56px; flex: none; white-space: nowrap; margin-left: 1px; }
.numinput { width: 42px; height: 10px; background: #fff; display: flex; justify-content: space-between; align-items: center; padding-left: 2px; font-size: 6.300px; flex: none; margin: 0 3px 0 2px; }
.spin { background: #ccc; width: 8px; height: 100%; text-align: center; line-height: 8px; }
.nn { color: #1a3a8a; font-weight: bold; font-size: 7px; width: 12px; text-align: center; flex: none; }

.workspace { flex: 1; min-height: 0; display: flex; }
.rail { width: 15px; display: flex; flex-direction: column; align-items: center; background: linear-gradient(90deg, #b4b4b4, #d0d0d0); flex: none; gap: 1.900px; padding-top: 1px; }
.railL { height: 169px; margin-left: 1px; }
.railR { height: 241px; margin-left: 1px; }
.railgrip { width: 9px; height: 2px; border-top: 1px dotted #444; flex: none; }
.r { width: 11px; height: 11px; flex: none; }
.hs { width: 11px; height: 1px; background: #888; flex: none; }

.project { width: 150px; height: 408px; background: #a6a6a6; flex: none; display: flex; flex-direction: column; }
.paneltitle { height: 12px; display: flex; justify-content: space-between; align-items: center; padding: 0 3px; font-size: 6.500px; color: #4a4a4a; background: #a8a8a8; flex: none; }
.pnctl { font-size: 6px; color: #444; }
.ptb { height: 15px; padding-left: 6px; flex: none; background: linear-gradient(#c4c4c4, #a8a8a8); }
.treebox { flex: 1; background: #fff; margin: 0 2px; overflow: hidden; min-height: 0; }
.tree { list-style: none; margin: 0; padding: 0; font-size: 6.800px; color: #3a3a3a; white-space: nowrap; }
.tree li { height: 10.200px; display: flex; align-items: center; gap: 2px; position: relative; }
.tree strong { color: #111; font-size: 6.500px; }
.n0 { padding-left: 14px; gap: 1px !important; }
.n1 { padding-left: 24px; }
.n2 { padding-left: 35px; }
.v0 { background: linear-gradient(#ccc, #ccc) 6px 0 / 1px 100% no-repeat; }
.v1 { background: linear-gradient(#ccc, #ccc) 17px 0 / 1px 100% no-repeat; }
.n2::before { content: ""; position: absolute; left: 28px; top: 0; width: 6px; height: 5.500px; border-left: 1px solid #ccc; border-bottom: 1px solid #ccc; }
.n2.more::after { content: ""; position: absolute; left: 28px; top: 5px; bottom: 0; border-left: 1px solid #ccc; }
.n1::before { content: ""; position: absolute; left: 17px; top: 0; width: 6px; height: 5.500px; border-bottom: 1px solid #ccc; border-left: 1px solid #ccc; }
.n0 .pm { left: 4px; }
.n1 .pm { left: 15px; }
.pm { position: absolute; width: 5px; height: 5px; border: 1px solid #bbb; background: #eee; top: 2.500px; z-index: 1; }
.seltx { background: #f0f0f0; padding: 0 1px; }
.hscroll { height: 8px; margin: 0 2px; background: #ccc; display: flex; justify-content: space-between; padding: 0 3px; line-height: 7px; font-weight: bold; flex: none; }
.btabs { height: 14px; display: flex; align-items: center; gap: 2px; padding-left: 3px; color: #eee; font-size: 6.200px; background: #4f4f4f; flex: none; }
.ptabs { margin-top: 1px; }
.btab { display: flex; align-items: center; gap: 2px; padding: 1px; font-weight: bold; color: #ddd; }
.btab.act { background: #f2f2f2; color: #333; border-radius: 1px; }

.center { width: 356px; margin-left: 2px; flex: none; display: flex; flex-direction: column; }
.viewtabs { height: 14px; display: flex; align-items: flex-end; gap: 2px; background: linear-gradient(#a0a0a0, #f4f4f4); font-size: 6.200px; flex: none; padding-left: 3px; }
.navfirst { color: #666; font-size: 5px; width: 16px; align-self: center; }
.vtab { height: 12px; display: flex; align-items: center; gap: 2px; padding: 0 2px 0 4px; background: #555; color: #e4e4e4; font-weight: bold; border-radius: 2px 2px 0 0; white-space: nowrap; }
.vtab.act { background: #fff; color: #111; padding: 0 2px 0 3px; }
.vnav { margin-left: auto; display: flex; gap: 1px; align-self: center; margin-right: 4px; }
.viewport { height: 297px; background: #fff; flex: none; }
.scene { width: 356px; height: 297px; display: block; }
.winstroke { stroke: #5cc6be; stroke-width: 3; fill: none; }
.oeste { font-size: 46px; fill: #2a6fd0; font-family: "Liberation Sans", Arial, sans-serif; }

.capitulos { width: 241px; height: 94px; margin-top: 3px; flex: none; display: flex; flex-direction: column; background: #a4a4a4; }
.captitle { height: 11px; font-size: 6.500px; color: #555; padding-left: 3px; flex: none; display: flex; align-items: center; }
.ctb { height: 16px; padding-left: 4px; flex: none; background: linear-gradient(#b8b8b8, #a0a0a0); }
.captable { width: 238px; table-layout: fixed; border-collapse: collapse; background: #fff; margin: 0 0 0 2px; color: #222; flex: none; }
.c1 { width: 90px; } .c2 { width: 14px; } .c3 { width: 13px; } .c4 { width: 64px; }
.captable th { height: 12px; background: linear-gradient(#fafafa, #d8d8d8); border-right: 1px solid #c4c4c4; padding: 0; font-weight: bold; text-align: center; font-size: 6.200px; overflow: hidden; white-space: nowrap; }
.captable th.left { text-align: left; padding-left: 3px; }
.captable td { height: 11.300px; border-right: 1px solid #eee; border-bottom: 1px solid #eee; padding: 0; text-align: center; white-space: nowrap; overflow: hidden; font-size: 6.200px; }
.captable td .t, .captable th .t { vertical-align: middle; }
.captable td.name { text-align: left; padding-left: 1px; font-size: 6.600px; }
.captable td.fl { text-align: left; padding-left: 3px; }
.hl { background: #0a80f0; color: #fff; display: inline-block; width: 78px; }
.hl2 { background: #2a8cf0; color: #fff; }
.captable .blank td { height: 6px; }
.ctabs { margin-top: auto; width: 100%; }

.tools { width: 158px; height: 135px; margin-left: 1px; background: #a6a6a6; flex: none; display: flex; flex-direction: column; }
.gtabs { height: 13px; display: flex; align-items: flex-end; gap: 1px; padding: 0 3px; background: #f2f2f2; flex: none; }
.gtab { height: 12px; flex: 1; display: flex; justify-content: center; align-items: center; background: #e0e0e0; border-top: 1px solid #aaa; clip-path: polygon(5px 0, 100% 0, 100% 100%, 0 100%); }
.gtab.wide { flex: 1.500; }
.gtab.act { background: #fff; }
.gnav { width: 9px; height: 9px; border: 1px solid #999; background: #eee; display: flex; align-items: center; justify-content: center; margin-bottom: 1px; flex: none; }
.toolbody { flex: 1; background: #fff; margin: 0 2px; overflow: hidden; }
.gtb { height: 14px; display: flex; align-items: center; gap: 2px; padding-left: 3px; border-bottom: 1px solid #ccc; background: #f6f6f6; }
.dials { height: 63px; display: flex; align-items: center; padding: 2px 0 0 4.500px; gap: 10px; }
.dial { width: 51px; height: 51px; flex: none; }
.slider { width: 3px; height: 46px; background: #e4e4e4; position: relative; flex: none; }
.thumb { position: absolute; left: -2px; width: 7px; height: 2px; background: #1478d4; }
.thumb.mid { top: 22px; }
.thumb.low { top: 32px; }
.gtb2 { height: 14px; display: flex; align-items: center; gap: 2px; padding-left: 3px; background: #f0f0f0; border-bottom: 1px solid #ccc; }
.fecha { display: flex; align-items: center; margin-top: 6px; padding-left: 9px; font-size: 6.500px; gap: 12px; color: #333; }
.dateinput { width: 57px; height: 12px; border: 1px solid #aaa; display: flex; justify-content: space-between; align-items: center; padding: 0 2px; }
.calbtn { color: #555; }

.statusbar { height: 9px; background: #333; color: #eee; font-size: 6.500px; display: flex; align-items: center; flex: none; padding-left: 2px; }
.sthelp { width: 489px; font-weight: bold; font-size: 6px; }
.stv { width: 38px; }
.red { color: #c01818; }
.green { color: #1a7a1a; }
.blue { color: #2030e0; }
.stk { width: 16px; color: #999; font-weight: bold; text-align: center; font-size: 6.200px; }
.stk.on { color: #fff; background: #777; }

.dialog { position: absolute; left: 406px; top: 191px; width: 274px; height: 257px; background: #f0f0f0; border: 1px solid #8cbce8; box-shadow: 1px 2px 4px rgba(0,0,0,.4); display: flex; flex-direction: column; }
.dlgtitle { height: 14px; background: #fff; display: flex; justify-content: space-between; align-items: center; padding: 0 4px 0 2px; font-size: 6.800px; color: #333; flex: none; }
.dlgx { width: 7px; height: 7px; }
.report { margin: 6px 6px 0 7px; height: 182px; background: #fff; border: 1px solid #777; border-right-color: #ddd; border-bottom-color: #ddd; display: flex; overflow: hidden; flex: none; }
.reptext { flex: 1; padding: 9px 0 0 32px; font-size: 6.100px; line-height: 7.300px; color: #2a2ae0; min-width: 0; overflow: hidden; white-space: nowrap; }
.reptext h2 { font-size: 6.150px; font-weight: normal; margin: 0 -10px 15px -10px; color: #4444b8; line-height: 7.300px; }
.reptext p { margin: 0 0 7.500px; }
.vscroll { width: 10px; background: #f8f8f8; display: flex; flex-direction: column; flex: none; position: relative; }
.sup, .sdn { height: 10px; position: relative; flex: none; }
.sup::after, .sdn::after { content: ""; position: absolute; left: 3px; top: 4px; width: 3px; height: 3px; border-left: 1px solid #444; border-top: 1px solid #444; transform: rotate(45deg); }
.sdn::after { transform: rotate(225deg); }
.sthumb { margin-top: auto; height: 50px; background: #cdcdcd; margin-bottom: 13px; }
.pct { text-align: center; font-size: 6.300px; height: 14px; line-height: 17px; color: #333; flex: none; }
.bar { height: 12px; margin: 1px 6px 0 7px; background: #0cab2c; border: 1px solid #ccc; flex: none; }
.dlgbtns { display: flex; justify-content: flex-start; gap: 15px; margin: 7px 0 0 28px; }
.btn { width: 63px; height: 14px; font: 6.500px "Liberation Sans", Arial, sans-serif; background: #ececec; border: 1px solid #999; border-right-color: #777; border-bottom-color: #777; box-shadow: inset 1px 1px 0 #fff; color: #222; padding: 0; display: flex; align-items: center; justify-content: center; gap: 2px; }
.btn.dis { color: #aaa; gap: 14px; }
.btn.def { border: 1px solid #555; box-shadow: inset 0 0 0 1px #bbb; }
.pause { font-weight: bold; color: #777; }
```
